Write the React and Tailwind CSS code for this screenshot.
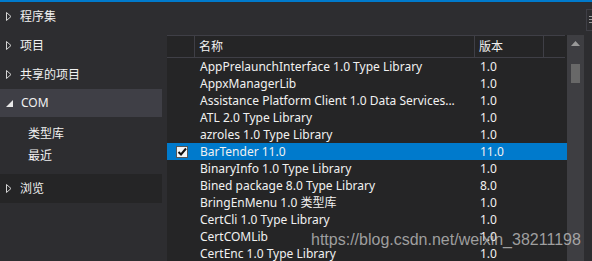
import React from 'react';

const rows = [
  { name: 'AppPrelaunchInterface 1.0 Type Library', ver: '1.0' },
  { name: 'AppxManagerLib', ver: '1.0' },
  { name: 'Assistance Platform Client 1.0 Data Services...', ver: '1.0' },
  { name: 'ATL 2.0 Type Library', ver: '1.0' },
  { name: 'azroles 1.0 Type Library', ver: '1.0' },
  { name: 'BarTender 11.0', ver: '11.0', checked: true },
  { name: 'BinaryInfo 1.0 Type Library', ver: '1.0' },
  { name: 'Bined package 8.0 Type Library', ver: '8.0' },
  { name: 'BringEnMenu 1.0 类型库', ver: '1.0' },
  { name: 'CertCli 1.0 Type Library', ver: '1.0' },
  { name: 'CertCOMLib', ver: '1.0' },
  { name: 'CertEnc 1.0 Type Library', ver: '1.0' },
];

const Collapsed = () => (
  <svg width="6" height="9" viewBox="0 0 6 9" className="shrink-0">
    <polygon points="0.5,0.5 5,4.5 0.5,8.5" fill="none" stroke="#d4d4d4" strokeWidth="1" />
  </svg>
);

const Expanded = () => (
  <svg width="7" height="7" viewBox="0 0 7 7" className="shrink-0">
    <polygon points="7,0 7,7 0,7" fill="#e8e8e8" />
  </svg>
);

const TreeItem = ({ label, children, className = '' }) => (
  <div className={`flex items-center gap-[8px] pl-[6px] ${className}`}>
    {children || <Collapsed />}
    <span>{label}</span>
  </div>
);

const CheckIcon = () => (
  <svg width="12" height="12" viewBox="0 0 12 12">
    <rect x="0" y="0" width="12" height="12" fill="#f5f5f5" />
    <rect x="0.5" y="0.5" width="11" height="11" fill="none" stroke="#555" />
    <path d="M2.5 6 L5 8.5 L10 2.5" fill="none" stroke="#111" strokeWidth="2" />
  </svg>
);

export default function App() {
  return (
    <div
      className="w-[592px] h-[261px] overflow-hidden bg-[#2d2d30] text-[#f1f1f1] text-[12px] flex flex-col relative"
      style={{ fontFamily: '"Noto Sans", "Noto Sans CJK SC", sans-serif' }}
    >
      <div className="h-[2px] bg-[#007acc] shrink-0" />
      <div className="flex flex-1 min-h-0">
        {/* left tree */}
        <div className="w-[167px] shrink-0">
          <div className="w-[162px]">
            <TreeItem label="程序集" className="h-[29px]" />
            <TreeItem label="项目" className="h-[29px]" />
            <TreeItem label="共享的项目" className="h-[29px]" />
            <TreeItem label="COM" className="h-[28px] bg-[#3f3f46]">
              <Expanded />
            </TreeItem>
            <div className="pt-[6px] pl-[28px]">
              <div className="h-[22px] flex items-center">类型库</div>
              <div className="h-[22px] flex items-center">最近</div>
            </div>
            <TreeItem label="浏览" className="h-[29px] mt-[7px] bg-[#252526]" />
          </div>
        </div>

        {/* list */}
        <div className="flex-1 flex flex-col pt-[33px]">
          <div className="flex flex-1 min-h-0">
            <div className="w-[400px] bg-[#252526] flex flex-col">
              <div className="h-[23px] flex border-t border-b border-[#3f3f46] shrink-0 w-[398px]">
                <div className="w-[28px] border-r border-[#3f3f46]" />
                <div className="w-[280px] border-r border-[#3f3f46] pl-[4px] flex items-center">名称</div>
                <div className="w-[69px] border-r border-[#3f3f46] pl-[4px] flex items-center">版本</div>
                <div className="flex-1" />
              </div>
              {rows.map((r) => (
                <div
                  key={r.name}
                  className={`h-[17px] flex items-center shrink-0 ${r.checked ? 'bg-[#007acc]' : ''}`}
                >
                  <div className="w-[28px] flex justify-center pl-[2px]">{r.checked && <CheckIcon />}</div>
                  <div className="w-[280px] pl-[5px] whitespace-nowrap overflow-hidden">{r.name}</div>
                  <div className="pl-[5px]">{r.ver}</div>
                </div>
              ))}
            </div>
            {/* scrollbar */}
            <div className="w-[17px] bg-[#3e3e42] flex flex-col items-center">
              <svg width="9" height="5" viewBox="0 0 9 5" className="mt-[6px]">
                <polygon points="4.5,0 9,5 0,5" fill="#999999" />
              </svg>
              <div className="w-[9px] h-[19px] bg-[#686868] mt-[18px]" />
            </div>
          </div>
        </div>

        {/* right edge strip */}
        <div className="w-[8px] shrink-0 pt-[7px] pl-[2px]">
          <div className="h-[22px] w-[10px] border border-[#3f3f46] flex flex-col gap-[2px] pt-[6px] pl-[2px]">
            <div className="h-px w-[3px] bg-[#999]" />
            <div className="h-px w-[3px] bg-[#999]" />
            <div className="h-px w-[3px] bg-[#999]" />
          </div>
        </div>
      </div>

      {/* watermark */}
      <div
        className="absolute left-[311px] top-[231px] text-[16px] leading-[18px] text-[#c8c8c8]/75 whitespace-nowrap pointer-events-none"
        style={{ fontFamily: '"Liberation Sans", Arial, sans-serif' }}
      >
        https://blog.csdn.net/weixin_38211198
      </div>
    </div>
  );
}
